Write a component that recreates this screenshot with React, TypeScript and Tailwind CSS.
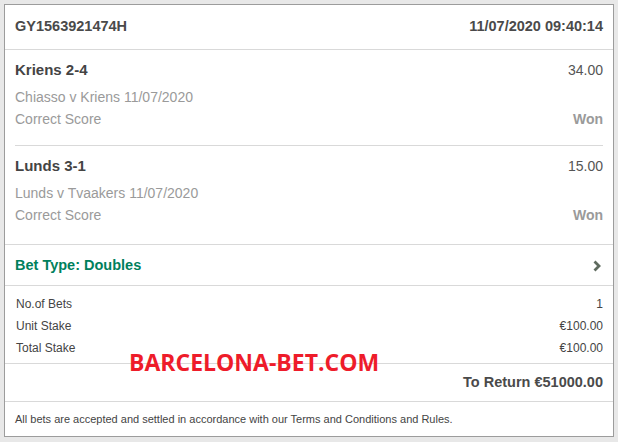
import React from 'react';

interface Selection {
   name: string;
   odds: string;
   event: string;
   market: string;
   result: string;
}

const selections: Selection[] = [
   {
      name: 'Kriens 2-4',
      odds: '34.00',
      event: 'Chiasso v Kriens 11/07/2020',
      market: 'Correct Score',
      result: 'Won',
   },
   {
      name: 'Lunds 3-1',
      odds: '15.00',
      event: 'Lunds v Tvaakers 11/07/2020',
      market: 'Correct Score',
      result: 'Won',
   },
];

const stakes = [
   { label: 'No.of Bets', value: '1' },
   { label: 'Unit Stake', value: '€100.00' },
   { label: 'Total Stake', value: '€100.00' },
];

function SelectionBlock({ sel, last }: { sel: Selection; last: boolean }) {
   return (
      <div className="px-[10px]">
         <div
            className={`pt-[10px] ${
               last ? 'pb-[18px]' : 'pb-[15px] border-b border-[#d9d9d9]'
            }`}
         >
            <div className="flex justify-between items-center h-[20px]">
               <span className="text-[15px] font-bold text-[#444]">{sel.name}</span>
               <span className="text-[14px] text-[#555]">{sel.odds}</span>
            </div>
            <div className="mt-[6px] text-[14px] leading-[22px] text-[#9a9a9a]">
               {sel.event}
            </div>
            <div className="flex justify-between items-center h-[22px] text-[14px] text-[#9a9a9a]">
               <span>{sel.market}</span>
               <span className="font-bold">{sel.result}</span>
            </div>
         </div>
      </div>
   );
}

export default function App() {
   return (
      <div
         className="w-[618px] h-[442px] bg-[#e8e8e8] pt-[4px] pl-[4px]"
         style={{ fontFamily: '"Liberation Sans", Arial, sans-serif' }}
      >
         <div className="relative w-[610px] h-[433px] bg-white border border-[#9c9c9c]">
            {/* Header */}
            <div className="h-[45px] px-[10px] flex items-center justify-between border-b border-[#d9d9d9] text-[14.5px] font-bold text-[#4a4a4a]">
               <span>GY1563921474H</span>
               <span>11/07/2020 09:40:14</span>
            </div>

            {selections.map((sel, i) => (
               <SelectionBlock key={i} sel={sel} last={i === selections.length - 1} />
            ))}

            {/* Bet type */}
            <div className="h-[42px] pt-[2px] px-[10px] flex items-center justify-between border-t border-b border-[#d9d9d9]">
               <span className="text-[14.5px] font-bold text-[#00805c]">Bet Type: Doubles</span>
               <svg width="10" height="12" viewBox="0 0 10 12" className="mr-[1px]">
                  <path d="M2.5 1.5 L7 6 L2.5 10.5" fill="none" stroke="#5f6b5f" strokeWidth="2.8" />
               </svg>
            </div>

            {/* Stakes */}
            <div className="px-[10px] pt-[7px] pb-[4px] border-b border-[#d9d9d9]">
               {stakes.map((s) => (
                  <div
                     key={s.label}
                     className="flex justify-between items-center h-[22px] text-[12px] text-[#444]"
                  >
                     <span className="pl-[1px]">{s.label}</span>
                     <span>{s.value}</span>
                  </div>
               ))}
            </div>

            {/* To return */}
            <div className="h-[38px] px-[10px] flex items-center justify-end border-b border-[#d9d9d9] text-[14.5px] font-bold text-[#4a4a4a]">
               To Return €51000.00
            </div>

            {/* Footer */}
            <div className="h-[34px] px-[10px] flex items-center text-[11px] text-[#444]">
               All bets are accepted and settled in accordance with our Terms and Conditions and Rules.
            </div>

            {/* Watermark */}
            <div
               className="absolute left-[124px] top-[346px] text-[23px] font-bold text-[#ee1c2a] leading-none"
               style={{ fontFamily: '"Open Sans", sans-serif' }}
            >
               BARCELONA-BET.COM
            </div>
         </div>
      </div>
   );
}
